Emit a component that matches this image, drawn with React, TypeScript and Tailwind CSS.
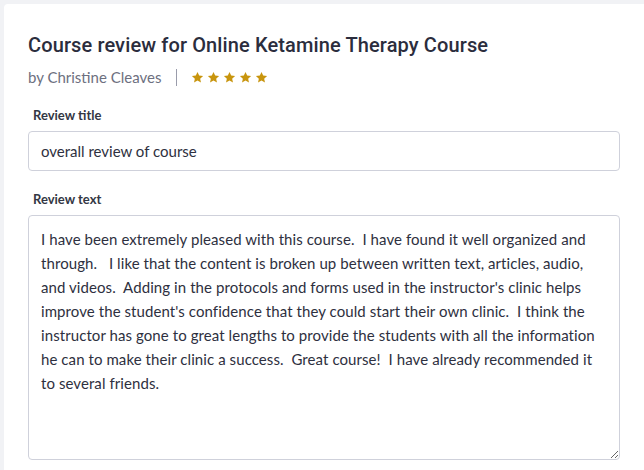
import React from "react";

// line breaks follow the wrapped text in the original form
const REVIEW = [
  "I have been extremely pleased with this course.  I have found it well organized and",
  "through.   I like that the content is broken up between written text, articles, audio,",
  "and videos.  Adding in the protocols and forms used in the instructor's clinic helps",
  "improve the student's confidence that they could start their own clinic.  I think the",
  "instructor has gone to great lengths to provide the students with all the information",
  "he can to make their clinic a success.  Great course!  I have already recommended it",
  "to several friends.",
].join("\n");

function Star() {
  return (
    <svg viewBox="0 0 24 24" className="w-[13px] h-[13px]" fill="#c8950e">
      <path d="M12 1.8l3.1 6.6 7.2.8-5.4 4.9 1.5 7.1L12 17.6l-6.4 3.6 1.5-7.1-5.4-4.9 7.2-.8z" />
    </svg>
  );
}

export default function App() {
  return (
    <div className="min-h-[470px] bg-[#f1f2f5] pl-[4px] pt-[4px] font-['Lato',sans-serif]">
      <div className="bg-white rounded-tl-[4px] min-h-[466px] pl-[24px] pr-[24px] pt-[29px]">
        {/* Header */}
        <h1 className="font-['Roboto',sans-serif] font-medium text-[20px] leading-[24px] tracking-[0.12px] text-[#2b2d3d]">
          Course review for Online Ketamine Therapy Course
        </h1>
        <div className="flex items-center mt-[8px] h-[24px]">
          <span className="text-[15px] text-[#6d7080]">by Christine Cleaves</span>
          <span className="ml-[15px] mr-[14px] w-px h-[17px] bg-[#9a9cab]" />
          <div className="flex gap-[3px]">
            <Star />
            <Star />
            <Star />
            <Star />
            <Star />
          </div>
        </div>

        {/* Form */}
        <div className="mt-[16px]">
          <label className="block pl-[5px] text-[13px] font-bold text-[#333744] leading-[20px]">Review title</label>
          <input
            defaultValue="overall review of course"
            className="mt-[6px] w-full h-[40px] rounded-[4px] border border-[#cfd1db] px-[12px] text-[15px] text-[#2e3040] outline-none"
          />
        </div>
        <div className="mt-[18px]">
          <label className="block pl-[5px] text-[13px] font-bold text-[#333744] leading-[20px]">Review text</label>
          <textarea
            defaultValue={REVIEW}
            className="mt-[6px] block w-full h-[245px] rounded-[4px] border border-[#cfd1db] px-[12px] py-[11px] text-[15px] leading-[24px] tracking-[0.08px] text-[#2e3040] outline-none"
          />
        </div>
      </div>
    </div>
  );
}
